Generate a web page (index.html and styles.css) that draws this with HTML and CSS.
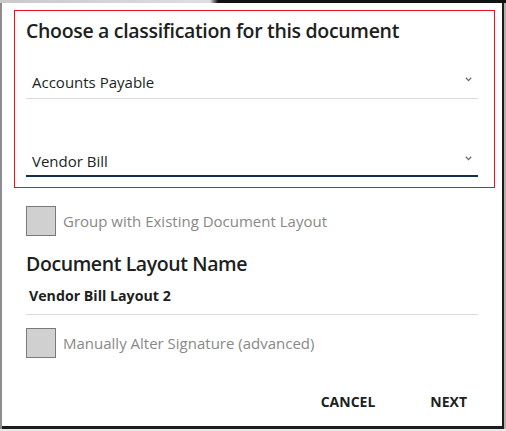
FILE: index.html
```html
<!DOCTYPE html>
<html>
<head>
<meta charset="utf-8">
<link rel="stylesheet" href="styles.css">
</head>
<body>
<div class="frame">
  <div class="topbar"></div>
  <div class="row">
    <div class="leftstrip"></div>
    <div class="dialog">
      <div class="classify">
        <div class="title">Choose a classification for this document</div>
        <div class="field select first">
          <span class="value">Accounts Payable</span>
          <svg class="chev" width="7" height="5" viewBox="0 0 7 5"><path d="M0.8 0.8 L3.5 3.6 L6.2 0.8" fill="none" stroke="#6b6b6b" stroke-width="1.3"/></svg>
        </div>
        <div class="field select second">
          <span class="value">Vendor Bill</span>
          <svg class="chev" width="7" height="5" viewBox="0 0 7 5"><path d="M0.8 0.8 L3.5 3.6 L6.2 0.8" fill="none" stroke="#6b6b6b" stroke-width="1.3"/></svg>
        </div>
      </div>
      <div class="check first-check">
        <span class="box"></span>
        <span class="label">Group with Existing Document Layout</span>
      </div>
      <div class="heading">Document Layout Name</div>
      <div class="field name">
        <span class="value">Vendor Bill Layout 2</span>
      </div>
      <div class="check second-check">
        <span class="box"></span>
        <span class="label">Manually Alter Signature (advanced)</span>
      </div>
      <div class="actions">
        <span class="btn cancel">CANCEL</span>
        <span class="btn next">NEXT</span>
      </div>
    </div>
  </div>
</div>
</body>
</html>
```
FILE: styles.css
```css
html, body {
  margin: 0;
  padding: 0;
}
body {
  width: 506px;
  height: 431px;
  overflow: hidden;
  background: #e6e4e0;
  font-family: "Open Sans", "Noto Sans", sans-serif;
  color: #201f1e;
}
.frame {
  display: flex;
  flex-direction: column;
  width: 506px;
  height: 431px;
  background: linear-gradient(to bottom, #b6b1a8 0, #b6b1a8 429px, #e9e9e9 429px);
}
.topbar {
  height: 3px;
  background: linear-gradient(to right, #c9c9c9 0, #dedede 210px, #111 218px, #111 100%);
}
.row {
  display: flex;
}
.leftstrip {
  width: 2px;
  flex: none;
  background: #8d8d8d;
}
.dialog {
  flex: none;
  width: 502px;
  height: 426px;
  box-sizing: border-box;
  background: #fff;
  border-right: 2px solid #1c1c1c;
  border-bottom: 3px solid #1c1c1c;
  display: flex;
  flex-direction: column;
  padding-left: 24px;
}
.classify {
  margin-top: 7px;
  margin-left: -12px;
  width: 481px;
  height: 178px;
  border: 1px solid #e81123;
  padding: 7px 16px 10px 11px;
  box-sizing: border-box;
  display: flex;
  flex-direction: column;
}
.title {
  font-size: 19.5px;
  font-weight: 600;
  line-height: 26px;
  letter-spacing: -0.32px;
  white-space: nowrap;
}
.field {
  display: flex;
  align-items: flex-start;
  justify-content: space-between;
  width: 452px;
  box-sizing: border-box;
  padding-left: 6px;
  padding-right: 6px;
  font-size: 15px;
  line-height: 20px;
}
.select.first {
  margin-top: 28px;
  padding-bottom: 6px;
  border-bottom: 1px solid #dcdcdc;
}
.select.second {
  margin-top: 52px;
  padding-bottom: 4px;
  border-bottom: 2px solid #0e3250;
}
.chev {
  margin-top: 5px;
}
.check {
  display: flex;
  align-items: center;
  gap: 7px;
}
.first-check {
  margin-top: 18px;
}
.second-check {
  margin-top: 13px;
}
.box {
  width: 28px;
  height: 28px;
  background: #d0d0d0;
  border: 1px solid #7a7a7a;
}
.label {
  font-size: 15px;
  line-height: 20px;
  color: #8a8886;
}
.heading {
  margin-top: 15px;
  font-size: 19.5px;
  font-weight: 600;
  line-height: 26px;
  letter-spacing: -0.4px;
}
.field.name {
  margin-top: 9px;
  padding-left: 3px;
  padding-bottom: 8px;
  border-bottom: 1px solid #dcdcdc;
  font-weight: 700;
  font-size: 14.2px;
}
.actions {
  margin-top: 34px;
  display: flex;
  justify-content: flex-end;
  gap: 55px;
  padding-right: 35px;
}
.btn {
  font-size: 14px;
  font-weight: 700;
  line-height: 20px;
  color: #201f1e;
}
```
